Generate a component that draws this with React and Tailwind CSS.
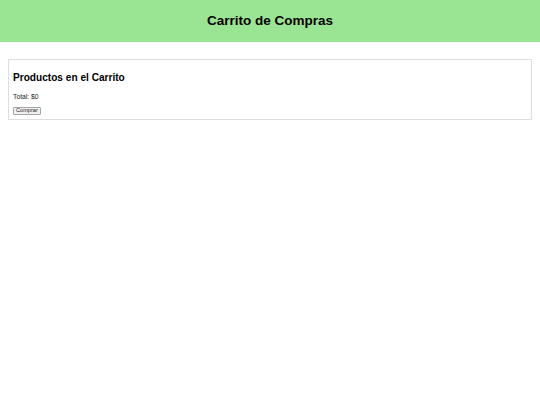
import React from "react";

const Carrito = () => {
  const total = 0;

  return (
    <div className="min-h-[405px] bg-white text-black font-['Liberation_Sans',Arial,sans-serif]">
      {/* Header */}
      <header className="h-[42px] bg-[#9ae594] flex items-center justify-center">
        <h1 className="text-[13.5px] font-bold leading-none">Carrito de Compras</h1>
      </header>

      {/* Cart */}
      <section className="mx-[8px] mt-[17px] border border-[#dedede] pl-[4px] pt-[13.4px] pb-[4.3px] flex flex-col items-start">
        <h2 className="text-[10.125px] font-bold leading-none">Productos en el Carrito</h2>
        <p className="mt-[10.1px] text-[6.75px] leading-none text-[#222]">Total: ${total}</p>
        <button className="mt-[6.9px] h-[7.5px] px-[2px] text-[5.6px] leading-none text-[#222] bg-[#f0f0f0] border border-[#a5a5a5] rounded-[1px] flex items-center">
          Comprar
        </button>
      </section>
    </div>
  );
};

export default Carrito;
